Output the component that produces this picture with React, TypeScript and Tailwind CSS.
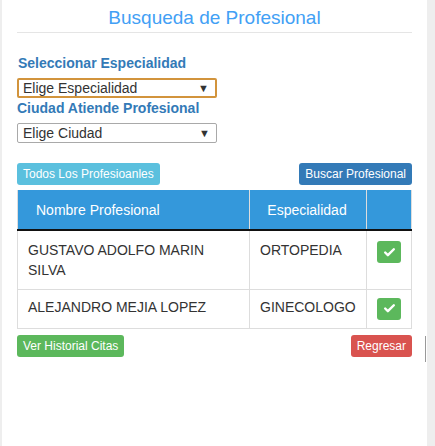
import { Check } from "lucide-react";

const font = { fontFamily: '"Liberation Sans", Arial, sans-serif' };

function Select({ label, focus }: { label: string; focus?: boolean }) {
  return (
    <div
      className={`flex h-[20px] w-[200px] items-center justify-between rounded-[2px] bg-white pr-[6px] text-[14px] font-normal leading-none text-[#333] ${
        focus ? "border-2 border-[#d2943c] pl-[4px]" : "border border-[#a9a9a9] pl-[5px]"
      }`}
    >
      <span className="-mt-[1px]">{label}</span>
      <span className="text-[11px] text-[#333]">▼</span>
    </div>
  );
}

function CheckBtn() {
  return (
    <div className="flex h-[22px] w-[24px] items-center justify-center rounded-[3px] bg-[#5cb85c]">
      <Check size={13} strokeWidth={4.5} className="text-white" />
    </div>
  );
}

export default function App() {
  return (
    <div className="relative flex h-[446px] w-[435px] bg-[#eeeeee]" style={font}>
      <div className="ml-[2px] h-full w-[425px] bg-white pl-[15px] pr-[15px]">
        <div className="h-[33px] border-b border-[#e5e5e5] pt-[8px] text-center text-[19px] leading-[20px] text-[#42a0f5]">
          Busqueda de Profesional
        </div>
        <div className="pt-[20px] text-[14px] font-bold leading-[20px] text-[#337ab7]">
          <div className="pl-[1px] leading-[20px]">Seleccionar Especialidad</div>
          <div className="mt-[5px]">
            <Select label="Elige Especialidad" focus />
          </div>
          <div className="h-[25px] leading-[20px]">Ciudad Atiende Profesional</div>
          <div>
            <Select label="Elige Ciudad" />
          </div>
        </div>
        <div className="mt-[20px] flex justify-between text-[12px] leading-none text-white">
          <div className="flex h-[22px] items-center rounded-[3px] bg-[#5bc0de] px-[6px]">Todos Los Profesioanles</div>
          <div className="flex h-[22px] items-center rounded-[3px] bg-[#337ab7] px-[6px]">Buscar Profesional</div>
        </div>
        <table className="mt-[5px] w-[395px] table-fixed border-collapse text-[14px] text-[#333]">
          <thead>
            <tr className="h-[40px] bg-[#3498db] text-white">
              <th className="w-[232px] border-x border-[#dddddd] border-b-2 border-b-[#111] pl-[5px] pt-[1px] text-left font-normal">
                <span className="ml-[13px]">Nombre Profesional</span>
              </th>
              <th className="w-[117px] border-x border-[#dddddd] border-b-2 border-b-[#111] pr-[2px] pt-[1px] font-normal">Especialidad</th>
              <th className="border-x border-[#dddddd] border-b-2 border-b-[#111]"></th>
            </tr>
          </thead>
          <tbody>
            <tr className="h-[59px]">
              <td className="border border-[#dddddd] px-[10px] pt-[9px] align-top leading-[20px]">GUSTAVO ADOLFO MARIN SILVA</td>
              <td className="border border-[#dddddd] px-[10px] pt-[9px] align-top leading-[20px]">ORTOPEDIA</td>
              <td className="border border-[#dddddd] pl-[10px] pt-[10px] align-top"><CheckBtn /></td>
            </tr>
            <tr className="h-[39px]">
              <td className="border border-[#dddddd] px-[10px] pt-[7px] align-top leading-[20px]">ALEJANDRO MEJIA LOPEZ</td>
              <td className="border border-[#dddddd] px-[10px] pt-[7px] align-top leading-[20px]">GINECOLOGO</td>
              <td className="border border-[#dddddd] pl-[10px] pt-[8px] align-top"><CheckBtn /></td>
            </tr>
          </tbody>
        </table>
        <div className="mt-[6px] flex justify-between text-[12px] leading-none text-white">
          <div className="flex h-[22px] items-center rounded-[3px] bg-[#5cb85c] px-[6px]">Ver Historial Citas</div>
          <div className="flex h-[22px] items-center rounded-[3px] bg-[#d9534f] px-[6px]">Regresar</div>
        </div>
      </div>
      <div className="absolute left-[425px] top-[336px] h-[26px] w-[1px] bg-[#999999]" />
    </div>
  );
}
